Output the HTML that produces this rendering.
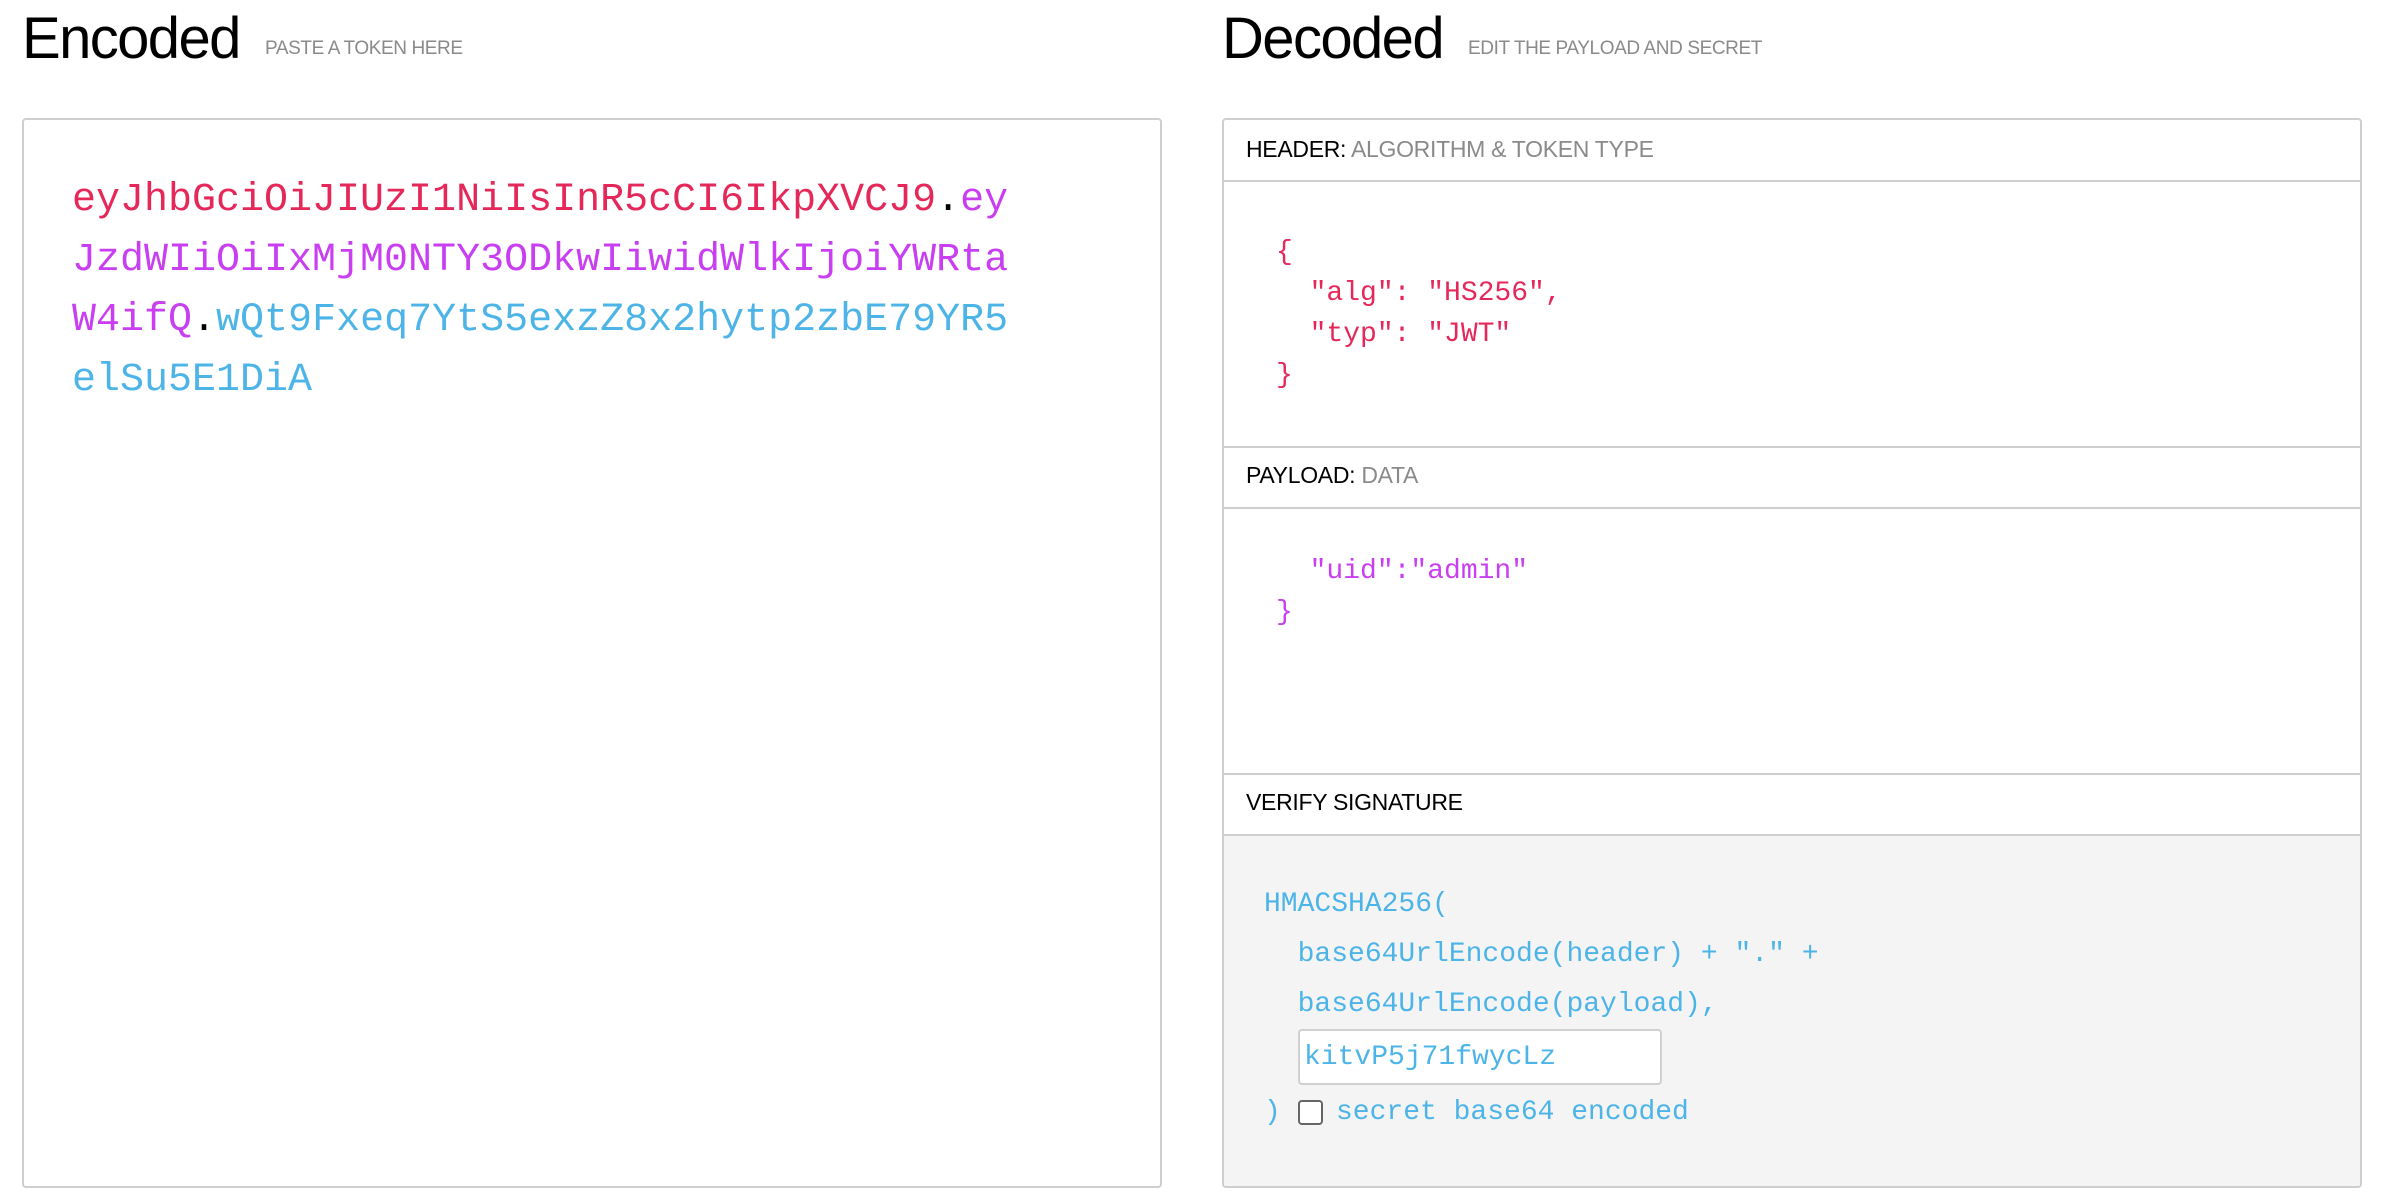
<!DOCTYPE html>
<html><head><meta charset="utf-8"><style>
*{margin:0;padding:0;box-sizing:border-box}
body{width:2386px;height:1204px;background:#fff;position:relative;overflow:hidden;font-family:"Liberation Sans",sans-serif}
.abs{position:absolute;white-space:pre}
h1{position:absolute;font-weight:400;font-size:58px;color:#000;letter-spacing:-1.6px;top:5px}
.sub{position:absolute;font-size:19px;color:#8a8a8a;top:38px;letter-spacing:-0.4px}
.box{position:absolute;border:2px solid #cfcfcf;border-radius:4px}
.mono{font-family:"Liberation Mono",monospace}
.hl{position:absolute;left:0;right:0;border-top:2px solid #cfcfcf}
.lbl{position:absolute;left:22px;font-size:23px;color:#000;letter-spacing:-0.3px}
.lbl span{color:#8a8a8a}
.r{color:#e5285a}.p{color:#c83ef0}.b{color:#4db4e8}
</style></head><body>
<h1 style="left:22px">Encoded</h1><div class="sub" style="left:265px">PASTE A TOKEN HERE</div>
<h1 style="left:1222px">Decoded</h1><div class="sub" style="left:1468px">EDIT THE PAYLOAD AND SECRET</div>

<div class="box" style="left:22px;top:118px;width:1140px;height:1070px"></div>
<div class="abs mono" style="left:72px;top:171px;font-size:40px;line-height:60px"><span class="r">eyJhbGciOiJIUzI1NiIsInR5cCI6IkpXVCJ9</span>.<span class="p">ey</span>
<span class="p">JzdWIiOiIxMjM0NTY3ODkwIiwidWlkIjoiYWRta</span>
<span class="p">W4ifQ</span>.<span class="b">wQt9Fxeq7YtS5exzZ8x2hytp2zbE79YR5</span>
<span class="b">elSu5E1DiA</span></div>

<div class="box" style="left:1222px;top:118px;width:1140px;height:1070px;overflow:hidden">
  <div style="position:absolute;left:0;right:0;top:716px;bottom:0;background:#f4f4f4"></div>
  <div class="hl" style="top:60px"></div>
  <div class="hl" style="top:326px"></div>
  <div class="hl" style="top:387px"></div>
  <div class="hl" style="top:653px"></div>
  <div class="hl" style="top:714px"></div>
  <div class="lbl" style="top:16px">HEADER: <span>ALGORITHM &amp; TOKEN TYPE</span></div>
  <div class="lbl" style="top:342px">PAYLOAD: <span>DATA</span></div>
  <div class="lbl" style="top:669px">VERIFY SIGNATURE</div>
  <div class="abs mono r" style="left:52px;top:112px;font-size:28px;line-height:41px">{
  "alg": "HS256",
  "typ": "JWT"
}</div>
  <div class="abs mono p" style="left:52px;top:431px;font-size:28px;line-height:41px">  "uid":"admin"
}</div>
  <div class="abs mono b" style="left:40px;top:760px;font-size:28px;line-height:50px">HMACSHA256(
  base64UrlEncode(header) + "." +
  base64UrlEncode(payload),</div>
  <div style="position:absolute;left:74px;top:909px;width:364px;height:56px;background:#fff;border:2px solid #d0d0d0;border-radius:4px"></div>
  <div class="abs mono b" style="left:80px;top:918px;font-size:28px;line-height:40px">kitvP5j71fwycLz</div>
  <div class="abs mono b" style="left:40px;top:973px;font-size:28px;line-height:40px">)</div>
  <div style="position:absolute;left:74px;top:980px;width:25px;height:25px;border:2px solid #666;border-radius:4px;background:#fff"></div>
  <div class="abs mono b" style="left:112px;top:973px;font-size:28px;line-height:40px">secret base64 encoded</div>
</div>
</body></html>
